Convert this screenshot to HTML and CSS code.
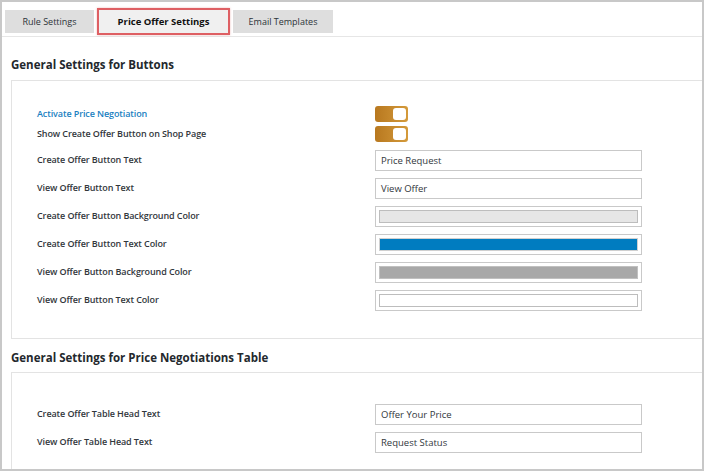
FILE: index.html
```html
<!DOCTYPE html>
<html>
<head>
<meta charset="utf-8">
<link rel="stylesheet" href="styles.css">
</head>
<body>
<div class="frame">
  <div class="tabs">
    <div class="tab tab-rule">Rule Settings</div>
    <div class="tab tab-active">Price Offer Settings</div>
    <div class="tab tab-email">Email Templates</div>
  </div>

  <h2 class="heading heading-first">General Settings for Buttons</h2>
  <div class="box box-buttons">
    <div class="row row-toggle">
      <span class="label label-blue">Activate Price Negotiation</span>
      <span class="toggle"><span class="knob"></span></span>
    </div>
    <div class="row row-toggle">
      <span class="label">Show Create Offer Button on Shop Page</span>
      <span class="toggle"><span class="knob"></span></span>
    </div>
    <div class="row">
      <span class="label">Create Offer Button Text</span>
      <span class="input">Price Request</span>
    </div>
    <div class="row">
      <span class="label">View Offer Button Text</span>
      <span class="input">View Offer</span>
    </div>
    <div class="row">
      <span class="label">Create Offer Button Background Color</span>
      <span class="color"><span class="swatch swatch-light"></span></span>
    </div>
    <div class="row">
      <span class="label">Create Offer Button Text Color</span>
      <span class="color"><span class="swatch swatch-blue"></span></span>
    </div>
    <div class="row">
      <span class="label">View Offer Button Background Color</span>
      <span class="color"><span class="swatch swatch-gray"></span></span>
    </div>
    <div class="row">
      <span class="label">View Offer Button Text Color</span>
      <span class="color"><span class="swatch swatch-white"></span></span>
    </div>
  </div>

  <h2 class="heading heading-second">General Settings for Price Negotiations Table</h2>
  <div class="box box-table">
    <div class="row">
      <span class="label">Create Offer Table Head Text</span>
      <span class="input">Offer Your Price</span>
    </div>
    <div class="row">
      <span class="label">View Offer Table Head Text</span>
      <span class="input">Request Status</span>
    </div>
  </div>
</div>
</body>
</html>
```

FILE: styles.css
```css
html, body {
  margin: 0;
  padding: 0;
  background: #ffffff;
}

body {
  font-family: "Open Sans", "Noto Sans", sans-serif;
  color: #32373c;
}

.frame {
  width: 704px;
  height: 471px;
  box-sizing: border-box;
  border: 2px solid #c8c8c8;
  overflow: hidden;
  background: #ffffff;
}

.tabs {
  display: flex;
  align-items: stretch;
  gap: 3px;
  padding: 8px 0 0 3px;
  height: 35px;
  box-sizing: border-box;
  border-bottom: 1px solid #e6e6e6;
}

.tab {
  height: 23px;
  background: #dedede;
  font-size: 9px;
  color: #2c3338;
  display: flex;
  align-items: center;
  justify-content: center;
  box-sizing: border-box;
}

.tab-rule { width: 89px; }
.tab-email { width: 100px; }

.tab-active {
  width: 133px;
  height: 27px;
  margin-top: -2px;
  background: #f0f0f0;
  border: 2px solid #de5f63;
  box-shadow: 0 0 2px rgba(200, 60, 60, 0.35);
  font-weight: 700;
  color: #111111;
  font-size: 9.5px;
}

.heading {
  margin: 0;
  font-size: 11.5px;
  font-weight: 700;
  color: #23282d;
  padding-left: 9px;
  box-sizing: border-box;
  line-height: 16px;
}

.heading-first {
  padding-top: 20px;
  height: 43px;
}

.heading-second {
  padding-top: 11px;
  height: 33px;
}

.box {
  margin-left: 9px;
  border: 1px solid #e3e3e3;
  border-right: none;
  background: #ffffff;
}

.box-buttons {
  padding: 25px 0 25px 25px;
  height: 259px;
  box-sizing: border-box;
  display: flex;
  flex-direction: column;
}

.box-table {
  padding: 31px 0 0 25px;
  height: 120px;
  box-sizing: border-box;
  display: flex;
  flex-direction: column;
  gap: 7px;
}

.row {
  display: grid;
  grid-template-columns: 338px 267px;
  align-items: center;
  height: 21px;
  margin-bottom: 7px;
}

.box-table .row { margin-bottom: 0; }

.row-toggle {
  height: 16px;
  margin-bottom: 4px;
}

.row-toggle + .row-toggle { margin-bottom: 8px; }

.label {
  font-size: 9px;
  color: #32373c;
  font-weight: 600;
  letter-spacing: -0.1px;
  padding-bottom: 2px;
}

.label-blue {
  color: #1a7fc1;
}

.toggle {
  width: 33px;
  height: 16px;
  border-radius: 3px;
  background: linear-gradient(to right, #b8781f, #d49a3b);
  display: flex;
  align-items: center;
  justify-content: flex-end;
  padding-right: 2px;
  box-sizing: border-box;
}

.knob {
  width: 13px;
  height: 12px;
  border-radius: 3px;
  background: #ffffff;
}

.input {
  height: 21px;
  box-sizing: border-box;
  border: 1px solid #c9c9c9;
  padding-left: 5px;
  font-size: 9.5px;
  color: #32373c;
  display: flex;
  align-items: center;
  background: #ffffff;
}

.color {
  height: 21px;
  box-sizing: border-box;
  border: 1px solid #c9c9c9;
  padding: 3px;
  display: flex;
  background: #ffffff;
}

.swatch {
  flex: 1;
  border: 1px solid #bdbdbd;
}

.swatch-light { background: #e6e6e6; }
.swatch-blue { background: #007cc0; border-color: #d0d0d0; }
.swatch-gray { background: #a8a8a8; border-color: #c0c0c0; }
.swatch-white { background: #ffffff; border-color: #bdbdbd; }
```
